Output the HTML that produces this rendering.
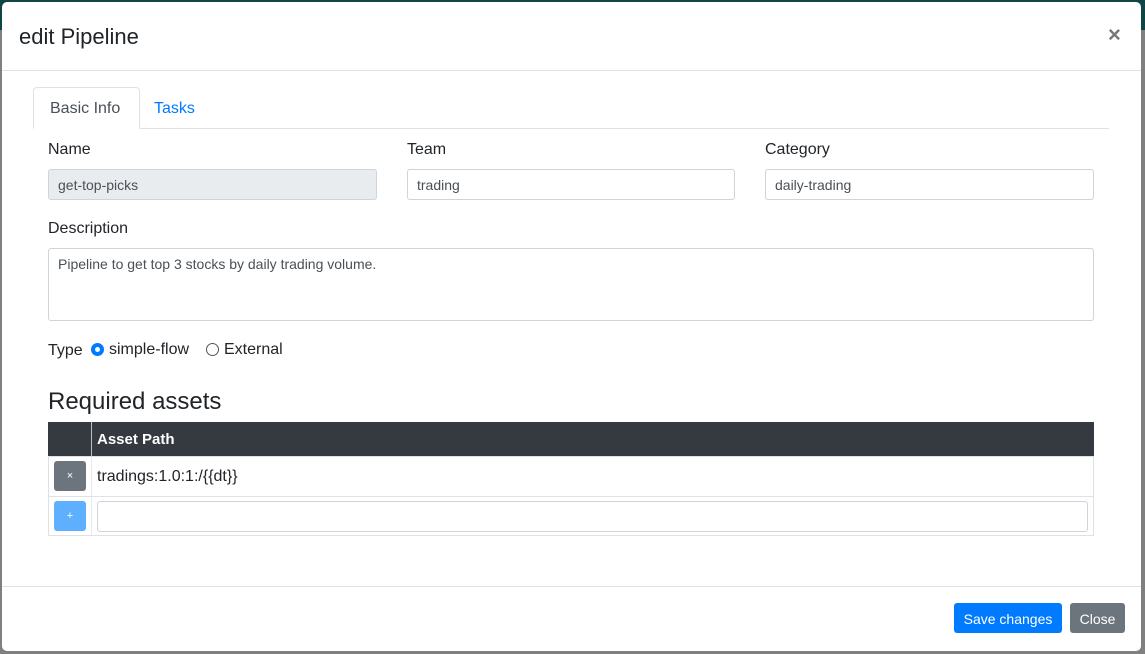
<!DOCTYPE html>
<html><head><style>
*{box-sizing:border-box;margin:0;padding:0}
body{width:1145px;height:654px;overflow:hidden;background:#808080;font-family:"Liberation Sans",Arial,sans-serif;color:#212529;position:relative}
.top{position:absolute;left:0;top:0;width:1145px;height:30px;background:#0e4646}
.modal{position:absolute;left:2px;top:2px;width:1139px;height:649px;background:#fff;border-radius:5px}
.a{position:absolute}
h5{position:absolute;left:17px;top:22px;font-size:22px;font-weight:400}
.x{position:absolute;left:1106px;top:20px;font-size:22px;color:#777;font-weight:bold}
.hr{position:absolute;left:0;width:1139px;height:1px;background:#dee2e6}
.tab{position:absolute;left:31px;top:85px;width:107px;height:42px;border:1px solid #dee2e6;border-bottom:1px solid #fff;border-radius:4px 4px 0 0;background:#fff;font-size:16px;color:#495057;padding:12px 0 0 16px}
.lbl{position:absolute;font-size:16px}
.in{position:absolute;height:31px;border:1px solid #ced4da;border-radius:3px;font-size:14px;padding:7px 9px;color:#495057}
.btn{position:absolute;color:#fff;font-size:14px;border-radius:3px;text-align:center}
</style></head><body>
<div class="top"></div>
<div class="modal">
<h5>edit Pipeline</h5>
<div class="x">×</div>
<div class="hr" style="top:68px"></div>
<div class="hr" style="top:126px;left:31px;width:1076px"></div>
<div class="tab">Basic Info</div>
<div class="lbl" style="left:152px;top:98px;color:#007bff">Tasks</div>
<div class="lbl" style="left:46px;top:139px">Name</div>
<div class="lbl" style="left:405px;top:139px">Team</div>
<div class="lbl" style="left:763px;top:139px">Category</div>
<div class="in" style="left:46px;top:167px;width:329px;background:#e9ecef">get-top-picks</div>
<div class="in" style="left:405px;top:167px;width:328px">trading</div>
<div class="in" style="left:763px;top:167px;width:329px">daily-trading</div>
<div class="lbl" style="left:46px;top:218px">Description</div>
<div class="in" style="left:46px;top:246px;width:1046px;height:73px">Pipeline to get top 3 stocks by daily trading volume.</div>
<div class="lbl" style="left:46px;top:340px">Type</div>
<div class="a" style="left:89px;top:341px;width:13px;height:13px;border-radius:50%;border:4px solid #007bff;background:#fff"></div>
<div class="lbl" style="left:107px;top:339px">simple-flow</div>
<div class="a" style="left:204px;top:341px;width:13px;height:13px;border-radius:50%;border:1px solid #555;background:#fff"></div>
<div class="lbl" style="left:222px;top:339px">External</div>
<div class="lbl" style="left:46px;top:386px;font-size:24px;font-weight:500">Required assets</div>
<div class="a" style="left:46px;top:420px;width:1046px;height:34px;background:#343a40"></div>
<div class="a" style="left:89px;top:420px;width:1px;height:114px;background:#dee2e6;opacity:.8"></div>
<div class="lbl" style="left:95px;top:429px;color:#fff;font-weight:bold;font-size:15px">Asset Path</div>
<div class="a" style="left:46px;top:454px;width:1046px;height:80px;border:1px solid #dee2e6"></div>
<div class="hr" style="top:494px;left:46px;width:1046px"></div>
<div class="btn" style="left:52px;top:459px;width:32px;height:30px;background:#6c757d;font-size:11px;padding-top:9px">×</div>
<div class="lbl" style="left:95px;top:466px">tradings:1.0:1:/{{dt}}</div>
<div class="btn" style="left:52px;top:499px;width:32px;height:30px;background:#5eb0ff;font-size:11px;padding-top:9px">+</div>
<div class="in" style="left:95px;top:499px;width:991px;height:31px"></div>
<div class="hr" style="top:584px"></div>
<div class="btn" style="left:952px;top:601px;width:108px;height:30px;background:#007bff;padding-top:8px">Save changes</div>
<div class="btn" style="left:1068px;top:601px;width:55px;height:30px;background:#6c757d;padding-top:8px">Close</div>
</div>
</body></html>
